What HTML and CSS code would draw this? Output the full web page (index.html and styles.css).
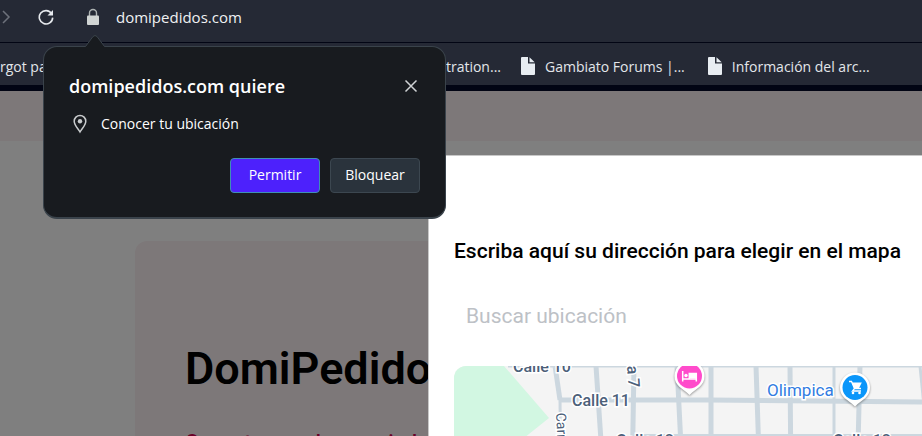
FILE: index.html
```html
<!DOCTYPE html>
<html lang="es">
<head>
<meta charset="utf-8">
<title>DomiPedidos</title>
<meta name="viewport" content="width=device-width, initial-scale=1">
<link rel="stylesheet" href="styles.css">
</head>
<body>
<header class="browser">
  <div class="toolbar">
    <button class="icon-button forward" type="button" aria-label="Adelante">
      <svg width="12" height="16" viewBox="0 0 12 16"><path d="M3 2l6 6-6 6" fill="none" stroke="#6d717b" stroke-width="1.5"/></svg>
    </button>
    <button class="icon-button reload" type="button" aria-label="Recargar">
      <svg width="16" height="16" viewBox="0 0 16 16"><path d="M13.6 4.6A6.7 6.7 0 1 0 14.7 8.6" fill="none" stroke="#e6e9ed" stroke-width="1.6"/><path d="M15 1v5.500h-5.500z" fill="#e6e9ed"/></svg>
    </button>
    <button class="icon-button" type="button" aria-label="Información del sitio">
      <svg width="14" height="18" viewBox="0 0 14 18"><path d="M3.500 8V5a3.500 3.500 0 0 1 7 0v3" fill="none" stroke="#aeb3b3" stroke-width="1.4"/><rect x="1" y="7.500" width="12" height="9.500" rx="1" fill="#d0d4d3"/></svg>
    </button>
    <span class="address">domipedidos.com</span>
  </div>
  <nav class="bookmarks">
    <a class="bookmark bookmark-first" href="#">rgot password</a>
    <a class="bookmark bookmark-second" href="#">Registration...</a>
    <a class="bookmark bookmark-third" href="#">
      <svg width="14" height="18" viewBox="0 0 14 18"><path d="M1 0h6v6.500h7V17a1 1 0 0 1-1 1H1a1 1 0 0 1-1-1V1a1 1 0 0 1 1-1z" fill="#e8edf2"/><path d="M8.500 0.300V5.300H13.700z" fill="#e8edf2"/></svg>
      Gambiato Forums |...</a>
    <a class="bookmark" href="#">
      <svg width="14" height="18" viewBox="0 0 14 18"><path d="M1 0h6v6.500h7V17a1 1 0 0 1-1 1H1a1 1 0 0 1-1-1V1a1 1 0 0 1 1-1z" fill="#e8edf2"/><path d="M8.500 0.300V5.300H13.700z" fill="#e8edf2"/></svg>
      Información del arc...</a>
  </nav>
</header>

<main class="page">
  <div class="site-bar"></div>
  <section class="hero">
    <h1>DomiPedidos</h1>
    <p>Conectamos de una ciudad</p>
  </section>
  <div class="backdrop">
    <section class="modal" aria-labelledby="modal-title">
      <h2 id="modal-title">Escriba aquí su dirección para elegir en el mapa</h2>
      <input class="search" type="text" placeholder="Buscar ubicación" aria-label="Buscar ubicación">
      <div class="map">
        <svg width="480" height="120" viewBox="454 366 480 120" role="img" aria-label="Mapa">
          <rect x="454" y="366" width="480" height="120" fill="#f4f4f4"/>
          <path d="M454 366h50l45 52-60 48h-35z" fill="#d2f7e2"/>
          <g fill="none" stroke="#ccd7df" stroke-width="5">
            <path d="M508 366h426" stroke-width="3"/>
            <path d="M555 366l5 34" /><path d="M560 400l1 86" stroke-width="3"/>
            <path d="M596 366l8 120M634 366l-2 120M677 366l6 120M711 366v120M756 366l4 120M790 366l1 120M860 366l-3 120"/>
            <path d="M834 366v120" stroke-width="3"/><path d="M920 366l6 60" stroke-width="3"/>
            <path d="M560 400h150l224 2"/><path d="M640 435h294" stroke-width="2"/>
          </g>
          <g class="street">
            <text x="513" y="372">Calle 10</text>
            <text x="572" y="406">Calle 11</text>
            <text x="616" y="446">Calle 12</text>
            <text x="833" y="446">Calle 12</text>
            <text transform="translate(624 322) rotate(86)">Carrera 7</text>
            <text class="minor" transform="translate(556 413) rotate(87)">Carrera 5</text>
          </g>
          <text class="place" x="767" y="396">Olimpica</text>
          <g class="pin">
            <path d="M674.500 376a15 15 0 1 1 30 0c0 10-8 12-15 19-7-7-15-9-15-19z" fill="#fff"/>
            <circle cx="689.500" cy="376" r="12.500" fill="#ff4bcb"/>
            <path d="M682.700 371v10.500M682.700 379h14M696.300 381.500v-8h-7v5" fill="none" stroke="#fff" stroke-width="1.500"/><rect x="689" y="373.500" width="7" height="5" fill="#fff"/><circle cx="686" cy="375.500" r="1.700" fill="#fff"/>
          </g>
          <g class="pin">
            <path d="M840 387.500a15 15 0 1 1 30 0c0 10-8 12-15 19-7-7-15-9-15-19z" fill="#fff"/>
            <circle cx="855" cy="387.500" r="12.500" fill="#0a96fa"/>
            <path d="M849 381.500h2.500l3 7h6.500M854.500 388.500l-2 2.500h8.500" fill="none" stroke="#fff" stroke-width="1.300"/><path d="M851.800 382.500h10l-2.700 5.500h-5z" fill="#fff"/><circle cx="853" cy="393" r="1.300" fill="#fff"/><circle cx="859.500" cy="393" r="1.300" fill="#fff"/>
          </g>
        </svg>
      </div>
    </section>
  </div>
</main>

<section class="permission" role="dialog" aria-labelledby="permission-title">
  <svg class="arrow" width="22" height="14" viewBox="0 0 22 14"><path d="M0 12.500h1.500L9 2.500q2-2 4 0l7.500 10H22V14H0z" fill="#181b1f"/><path d="M0 12.500h1.500L9 2.500q2-2 4 0l7.500 10H22" fill="none" stroke="#3a434b"/></svg>
  <div class="permission-head">
    <h2 id="permission-title">domipedidos.com quiere</h2>
    <button class="icon-button" type="button" aria-label="Cerrar">
      <svg width="14" height="14" viewBox="0 0 14 14"><path d="M1.500 1.500l11 11M12.500 1.500l-11 11" fill="none" stroke="#d0d3d5" stroke-width="1.500"/></svg>
    </button>
  </div>
  <p class="request">
    <svg width="14" height="20" viewBox="0 0 14 20"><path d="M7 18C5 14.500 1.200 11 1.200 7.200a5.800 5.800 0 0 1 11.600 0C12.800 11 9 14.500 7 18z" fill="none" stroke="#c9ccce" stroke-width="1.500"/><circle cx="7" cy="7.300" r="2.200" fill="#c9ccce"/></svg>
    Conocer tu ubicación
  </p>
  <div class="actions">
    <button class="action allow" type="button">Permitir</button>
    <button class="action" type="button">Bloquear</button>
  </div>
</section>
</body>
</html>
```

FILE: styles.css
```css
* { box-sizing: border-box; }

body {
  margin: 0;
  min-height: 100vh;
  display: flex;
  flex-direction: column;
  position: relative;
  overflow: hidden;
  font-family: "Open Sans", "Noto Sans", sans-serif;
  color: #fff;
}

h1, h2, p { margin: 0; }

.icon-button {
  display: flex;
  padding: 0;
  border: 0;
  background: none;
}

.browser {
  background: #252935;
  border-bottom: 6px solid #020514;
}

.toolbar {
  display: flex;
  align-items: center;
  height: 43px;
  padding-bottom: 8px;
  border-bottom: 1px solid #020514;
}

.reload { margin: 0 32px 0 26px; }

.address {
  margin-left: 16px;
  font-size: 15px;
  color: #f0f1f3;
}

.bookmarks {
  display: flex;
  align-items: center;
  height: 42px;
  padding-top: 4px;
  white-space: nowrap;
}

.bookmark {
  display: flex;
  align-items: center;
  gap: 10px;
  font-size: 14px;
  color: #e3e6ea;
  text-decoration: none;
}

.bookmark-first { flex: 0 0 400px; }
.bookmark-second { flex: 0 0 101px; justify-content: flex-end; }
.bookmark-third { margin: 0 23px 0 20px; }

.page {
  flex: 1 0 345px;
  position: relative;
  height: 345px;
  overflow: hidden;
  background: #fff;
  font-family: Roboto, sans-serif;
}

.site-bar {
  height: 50px;
  background: #fbf1f3;
}

.hero {
  margin: 100px 0 0 135px;
  padding: 98px 50px;
  height: 400px;
  border-radius: 12px;
  background: #fbf1f3;
  color: #000;
}

.hero h1 {
  font-size: 45px;
  line-height: 60px;
  font-weight: 600;
}

.hero p {
  margin-top: 29px;
  font-size: 21px;
  line-height: 28px;
  font-weight: 500;
  color: #d3004f;
}

.backdrop {
  position: absolute;
  inset: 0;
  padding: 64px 0 0 428px;
  background: rgba(0, 0, 0, 0.5);
}

.modal {
  min-height: 100%;
  padding: 81px 0 0 25px;
  border: solid #c8c8c8;
  border-width: 1px 0 0 1px;
  background: #fff;
  color: #000;
}

.modal h2 {
  font-size: 21px;
  line-height: 28px;
  font-weight: 500;
  white-space: nowrap;
}

.search {
  display: block;
  width: 100%;
  height: 40px;
  margin: 31px 0 30px;
  padding: 0 12px;
  border: 0;
  font: 21px Roboto, sans-serif;
}

.search::placeholder { color: #bdc1c6; }

.map {
  overflow: hidden;
  border-radius: 12px 0 0 0;
}

.map svg { display: block; }

.street text {
  font-size: 16px;
  font-weight: 500;
  fill: #4c6079;
  stroke: #fff;
  stroke-width: 3px;
  paint-order: stroke;
}

.street .minor {
  font-size: 14px;
  font-weight: 400;
}

.place {
  font-size: 17px;
  fill: #317ce2;
  stroke: #fff;
  stroke-width: 3px;
  paint-order: stroke;
}

.pin { filter: drop-shadow(0 1px 1px rgba(0, 0, 0, 0.4)); }

.permission {
  position: absolute;
  top: 46px;
  left: 43px;
  width: 403px;
  padding: 26px 25px 24px;
  border: 1px solid #3a434b;
  border-bottom-width: 2px;
  border-radius: 14px;
  background: #181b1f;
}

.arrow {
  position: absolute;
  top: -13px;
  left: 40px;
}

.permission-head {
  display: flex;
  align-items: center;
  justify-content: space-between;
  padding-right: 2px;
}

.permission-head h2 {
  font-size: 18px;
  line-height: 26px;
  font-weight: 600;
}

.request {
  display: flex;
  align-items: center;
  gap: 14px;
  margin-top: 15px;
  padding-left: 4px;
  font-size: 14px;
  line-height: 20px;
}

.actions {
  display: flex;
  justify-content: flex-end;
  gap: 10px;
  margin-top: 24px;
}

.action {
  width: 90px;
  height: 35px;
  padding: 0 0 2px;
  border: 1px solid #3c4750;
  border-radius: 4px;
  background: #2a333c;
  color: #fff;
  font: 14px "Open Sans", "Noto Sans", sans-serif;
}

.allow {
  border-color: #3f8fb5;
  background: #4d21fc;
}
```
